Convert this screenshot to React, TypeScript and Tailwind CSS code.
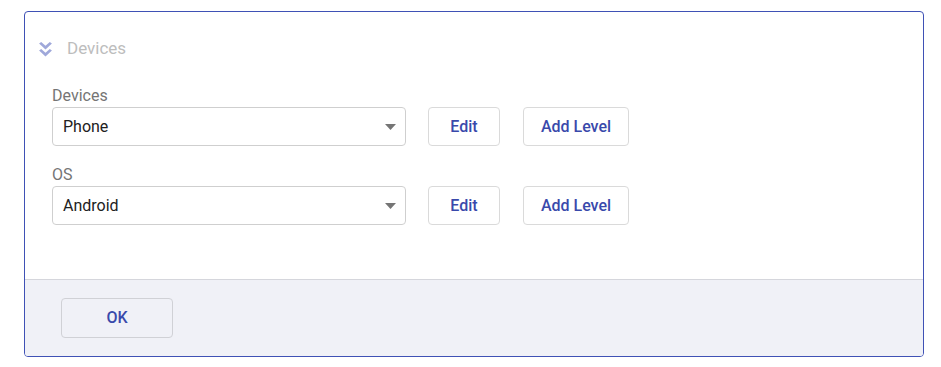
import React from "react";

function Caret() {
  return (
    <svg width="11" height="6" viewBox="0 0 11 6" className="shrink-0">
      <path d="M0 0 L11 0 L5.5 6 Z" fill="#757575" />
    </svg>
  );
}

function DoubleChevron() {
  return (
    <svg width="15" height="15" viewBox="0 0 14 14">
      <path d="M1 1.5 L3 0 L7 3.5 L11 0 L13 1.5 L7 7 Z" fill="#9fa8da" />
      <path d="M1 8 L3 6.5 L7 10 L11 6.5 L13 8 L7 13.5 Z" fill="#9fa8da" />
    </svg>
  );
}

function Row({ label, value, first }: { label: string; value: string; first?: boolean }) {
  return (
    <div className={first ? "mt-[26px]" : "mt-[18px]"}>
      <div className="h-[18px] leading-[21px] text-[16px] text-[#757575]">{label}</div>
      <div className="mt-[4px] flex items-center">
        <div className="w-[354px] h-[39px] border border-[#cfcfcf] rounded-[4px] flex items-center justify-between pl-[10px] pr-[9px] bg-white">
          <span className="text-[16px] text-[#212121]">{value}</span>
          <Caret />
        </div>
        <button className="ml-[22px] w-[72px] h-[39px] border border-[#dadada] rounded-[4px] bg-white text-[16px] font-medium text-[#3949ab]">
          Edit
        </button>
        <button className="ml-[23px] w-[106px] h-[39px] border border-[#dadada] rounded-[4px] bg-white text-[16px] font-medium text-[#3949ab]">
          Add Level
        </button>
      </div>
    </div>
  );
}

export default function App() {
  return (
    <div className="bg-white w-[941px] h-[367px] pt-[11px] pl-[24px]" style={{ fontFamily: "Roboto, 'Liberation Sans', sans-serif" }}>
      <div className="w-[900px] h-[346px] border border-[#3f51b5] rounded-[4px] flex flex-col overflow-hidden">
        <div className="mt-[27px] h-[20px] flex items-center pl-[13px]">
          <DoubleChevron />
          <span className="ml-[14px] text-[17px] text-[#bdbdbd]">Devices</span>
        </div>
        <div className="pl-[27px]">
          <Row label="Devices" value="Phone" first />
          <Row label="OS" value="Android" />
        </div>
        <div className="flex-1" />
        <div className="h-[77px] border-t border-[#d5d6dc] bg-[#f0f1f7] pt-[18px] pl-[36px]">
          <button className="w-[112px] h-[40px] border border-[#d0d1d6] rounded-[4px] bg-[#f0f1f7] text-[16px] font-medium text-[#3949ab]">
            OK
          </button>
        </div>
      </div>
    </div>
  );
}
